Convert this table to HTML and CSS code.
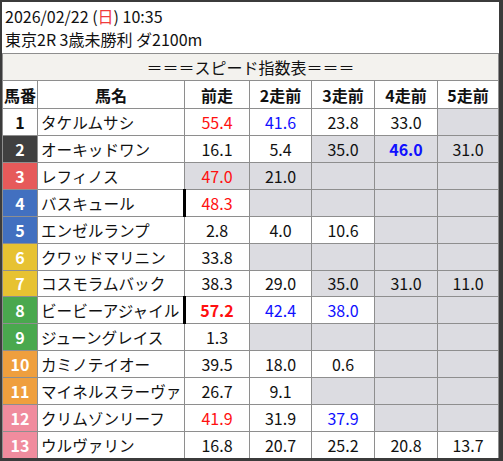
FILE: index.html
```html
<!DOCTYPE html>
<html lang="ja">
<head>
<meta charset="utf-8">
<title>スピード指数表</title>
<link rel="stylesheet" href="styles.css">
</head>
<body>
<div class="frame">
  <div class="info">
    <div class="line">2026/02/22 (<span class="sun">日</span>) 10:35</div>
    <div class="line">東京2R 3歳未勝利 ダ2100m</div>
  </div>
  <div class="sheet">
    <div class="title">＝＝＝スピード指数表＝＝＝</div>
    <div class="hd">馬番</div><div class="hd">馬名</div><div class="hd">前走</div><div class="hd">2走前</div><div class="hd">3走前</div><div class="hd">4走前</div><div class="hd">5走前</div>

    <div class="no w1">1</div><div class="nm">タケルムサシ</div><div class="v red">55.4</div><div class="v blue">41.6</div><div class="v">23.8</div><div class="v">33.0</div><div class="v na"></div>
    <div class="no w2">2</div><div class="nm">オーキッドワン</div><div class="v">16.1</div><div class="v">5.4</div><div class="v na">35.0</div><div class="v na blue b">46.0</div><div class="v na">31.0</div>
    <div class="no w3">3</div><div class="nm">レフィノス</div><div class="v na red">47.0</div><div class="v na">21.0</div><div class="v na"></div><div class="v na"></div><div class="v na"></div>
    <div class="no w4">4</div><div class="nm">バスキュール</div><div class="v red mark">48.3</div><div class="v na"></div><div class="v na"></div><div class="v na"></div><div class="v na"></div>
    <div class="no w4">5</div><div class="nm">エンゼルランプ</div><div class="v">2.8</div><div class="v">4.0</div><div class="v">10.6</div><div class="v na"></div><div class="v na"></div>
    <div class="no w6">6</div><div class="nm">クワッドマリニン</div><div class="v">33.8</div><div class="v na"></div><div class="v na"></div><div class="v na"></div><div class="v na"></div>
    <div class="no w6">7</div><div class="nm">コスモラムバック</div><div class="v">38.3</div><div class="v">29.0</div><div class="v na">35.0</div><div class="v na">31.0</div><div class="v na">11.0</div>
    <div class="no w8">8</div><div class="nm">ビービーアジャイル</div><div class="v red b mark">57.2</div><div class="v blue">42.4</div><div class="v blue">38.0</div><div class="v na"></div><div class="v na"></div>
    <div class="no w8">9</div><div class="nm">ジューングレイス</div><div class="v">1.3</div><div class="v na"></div><div class="v na"></div><div class="v na"></div><div class="v na"></div>
    <div class="no w10">10</div><div class="nm">カミノテイオー</div><div class="v">39.5</div><div class="v">18.0</div><div class="v">0.6</div><div class="v na"></div><div class="v na"></div>
    <div class="no w10">11</div><div class="nm">マイネルスラーヴァ</div><div class="v">26.7</div><div class="v">9.1</div><div class="v na"></div><div class="v na"></div><div class="v na"></div>
    <div class="no w12">12</div><div class="nm">クリムゾンリーフ</div><div class="v red">41.9</div><div class="v">31.9</div><div class="v blue">37.9</div><div class="v na"></div><div class="v na"></div>
    <div class="no w12">13</div><div class="nm">ウルヴァリン</div><div class="v">16.8</div><div class="v">20.7</div><div class="v">25.2</div><div class="v">20.8</div><div class="v">13.7</div>
  </div>
</div>
</body>
</html>
```
FILE: styles.css
```css
html, body {
  margin: 0;
  padding: 0;
  background: #ffffff;
}

body {
  font-family: "Noto Sans CJK JP", "Noto Sans", sans-serif;
  color: #111111;
  font-size: 16px;
}

.frame {
  width: 503px;
  height: 461px;
  box-sizing: border-box;
  border-style: solid;
  border-color: #3b3b3b;
  border-width: 2px 4px 3px 2px;
  display: flex;
  flex-direction: column;
  background: #ffffff;
}

.info {
  height: 51px;
  box-sizing: border-box;
  padding: 3px 0 0 3px;
  flex: none;
}

.line {
  line-height: 23px;
  height: 23px;
  white-space: nowrap;
}

.sun {
  color: #f03c3c;
}

.sheet {
  flex: none;
  height: 405px;
  box-sizing: border-box;
  display: grid;
  grid-template-columns: 34px 146px 64px 61px 62px 62px 60px;
  grid-template-rows: 26px 27px repeat(13, 1fr);
  gap: 1px;
  padding: 1px 1px 0 1px;
  background: #8e8e8e;
}

.sheet > div {
  display: flex;
  align-items: center;
  justify-content: center;
  background: #ffffff;
  white-space: nowrap;
  overflow: visible;
  position: relative;
}

.sheet > .title {
  grid-column: 1 / -1;
  background: #f3f2ee;
  font-size: 16px;
}

.sheet > .hd {
  font-weight: bold;
  font-size: 16px;
}

.sheet > .nm {
  justify-content: flex-start;
  padding-left: 3px;
  font-size: 15.6px;
}

.sheet > .no {
  font-weight: bold;
  color: #ffffff;
  font-size: 16px;
}

.sheet > .w1 { background: #ffffff; color: #111111; }
.sheet > .w2 { background: #404040; }
.sheet > .w3 { background: #e65a5a; }
.sheet > .w4 { background: #4270c0; }
.sheet > .w6 { background: #e7c232; }
.sheet > .w8 { background: #4aa84e; }
.sheet > .w10 { background: #ef9f3e; }
.sheet > .w12 { background: #f08c9e; }

.sheet > .na {
  background: #dcdce1;
}

.red { color: #ff1010; }
.blue { color: #1010ff; }
.b { font-weight: bold; }

.mark::before {
  content: "";
  position: absolute;
  left: -2px;
  top: -1px;
  bottom: -1px;
  width: 3px;
  background: #000000;
}
```
